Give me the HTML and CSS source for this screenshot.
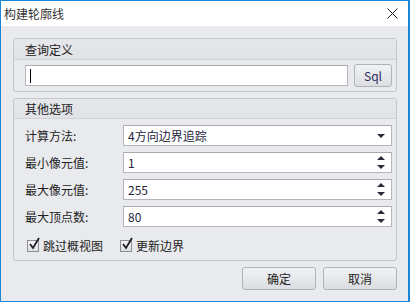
FILE: index.html
```html
<!DOCTYPE html>
<html lang="zh-CN">
<head>
    <meta charset="UTF-8">
    <link rel="stylesheet" href="styles.css">
    <title>构建轮廓线</title>
</head>
<body>
    <div class="window">
        <div class="titlebar">
            <span class="title">构建轮廓线</span>
            <svg class="close" width="11" height="11" viewBox="0 0 11 11">
                <path d="M0.5 0.5 L10.5 10.5 M10.5 0.5 L0.5 10.5" stroke="#222" stroke-width="1"/>
            </svg>
        </div>

        <div class="content">
            <div class="group">
                <div class="group-head">查询定义</div>
                <div class="group-body query-row">
                    <div class="field text-field"><span class="caret"></span></div>
                    <button class="btn sql-btn">Sql</button>
                </div>
            </div>

            <div class="group other">
                <div class="group-head">其他选项</div>
                <div class="group-body form">
                    <label class="label">计算方法:</label>
                    <div class="field combo">
                        <span class="value">4方向边界追踪</span>
                        <span class="arrow-down"></span>
                    </div>

                    <label class="label">最小像元值:</label>
                    <div class="field spin">
                        <span class="value">1</span>
                        <span class="spin-btns"><span class="arrow-up"></span><span class="arrow-down"></span></span>
                    </div>

                    <label class="label">最大像元值:</label>
                    <div class="field spin">
                        <span class="value">255</span>
                        <span class="spin-btns"><span class="arrow-up"></span><span class="arrow-down"></span></span>
                    </div>

                    <label class="label">最大顶点数:</label>
                    <div class="field spin">
                        <span class="value">80</span>
                        <span class="spin-btns"><span class="arrow-up"></span><span class="arrow-down"></span></span>
                    </div>

                    <div class="checks">
                        <span class="check">
                            <span class="box">
                                <svg width="14" height="14" viewBox="0 0 14 14"><path d="M3 7 L6 11 L12 1" fill="none" stroke="#1d1d2a" stroke-width="1.8"/></svg>
                            </span>跳过概视图
                        </span>
                        <span class="check">
                            <span class="box">
                                <svg width="14" height="14" viewBox="0 0 14 14"><path d="M3 7 L6 11 L12 1" fill="none" stroke="#1d1d2a" stroke-width="1.8"/></svg>
                            </span>更新边界
                        </span>
                    </div>
                </div>
            </div>

            <div class="footer">
                <button class="btn dlg-btn">确定</button>
                <button class="btn dlg-btn">取消</button>
            </div>
        </div>
    </div>
</body>
</html>
```

FILE: styles.css
```css
html, body {
    margin: 0;
    padding: 0;
}
body {
    font-family: "Noto Sans CJK SC", "Noto Sans", sans-serif;
    font-size: 12px;
    color: #222;
    background-color: #e9eaee;
}
.window {
    box-sizing: border-box;
    width: 410px;
    height: 302px;
    border: 1px solid #1b86d8;
    border-right-width: 2px;
    display: flex;
    flex-direction: column;
    background-color: #e9eaee;
}
.titlebar {
    height: 25px;
    flex: none;
    background-color: #fff;
    display: flex;
    align-items: center;
    justify-content: space-between;
    padding: 0 10px 0 3px;
}
.title {
    color: #333;
    line-height: 1;
}
.close {
    display: block;
}
.content {
    flex: 1;
    padding: 12px 11px 0 12px;
}
.group {
    border: 1px solid #c5c6cb;
    border-radius: 3px;
    background-color: #e9eaee;
}
.group + .group {
    margin-top: 6px;
}
.group-head {
    height: 20px;
    line-height: 22px;
    padding-left: 11px;
    background: linear-gradient(#e6e7eb, #e1e2e6);
    border-bottom: 1px solid #d2d3d7;
    border-radius: 3px 3px 0 0;
    color: #222;
}
.other .group-head {
    line-height: 20px;
    height: 19px;
}
.group-body {
    padding: 4px 4px 5px 11px;
}
.query-row {
    display: flex;
    align-items: flex-end;
    gap: 6px;
}
.field {
    box-sizing: border-box;
    height: 21px;
    background-color: #fff;
    border: 1px solid #b4b6bc;
    border-top-color: #a8aab0;
    display: flex;
    align-items: center;
    padding: 0 4px;
}
.text-field {
    flex: 1;
}
.caret {
    width: 1px;
    height: 14px;
    background-color: #000;
}
.btn {
    box-sizing: border-box;
    font-family: inherit;
    font-size: 12px;
    border: 1px solid #b1b2b6;
    border-radius: 3px;
    background: linear-gradient(#f1f2f4, #dcdde1);
    padding: 0;
    color: #222;
}
.sql-btn {
    width: 38px;
    height: 23px;
    margin-bottom: -1px;
    color: #2b2b5c;
}
.form {
    display: grid;
    grid-template-columns: 98px 1fr;
    row-gap: 6px;
    padding-top: 6px;
    padding-bottom: 6px;
}
.label {
    display: flex;
    align-items: center;
    height: 21px;
}
.value {
    flex: 1;
    color: #1e1e3c;
}
.arrow-down, .arrow-up {
    display: block;
    width: 0;
    height: 0;
    border-left: 4px solid transparent;
    border-right: 4px solid transparent;
}
.arrow-down {
    border-top: 4px solid #2a2a3a;
}
.arrow-up {
    border-bottom: 4px solid #2a2a3a;
}
.combo .arrow-down {
    margin-right: 2px;
}
.spin-btns {
    display: flex;
    flex-direction: column;
    gap: 5px;
    margin-right: 2px;
}
.checks {
    grid-column: 1 / 3;
    display: flex;
    gap: 17px;
    padding-top: 4px;
    padding-left: 2px;
}
.check {
    display: flex;
    align-items: center;
    gap: 4px;
}
.box {
    position: relative;
    box-sizing: border-box;
    width: 12px;
    height: 12px;
    border: 1px solid #8d8e93;
    background: linear-gradient(#f3f3f5, #dedfe3);
}
.box svg {
    position: absolute;
    left: -1px;
    top: -4px;
}
.footer {
    display: flex;
    justify-content: flex-end;
    gap: 7px;
    padding-top: 6px;
}
.dlg-btn {
    width: 74px;
    height: 23px;
}
```
